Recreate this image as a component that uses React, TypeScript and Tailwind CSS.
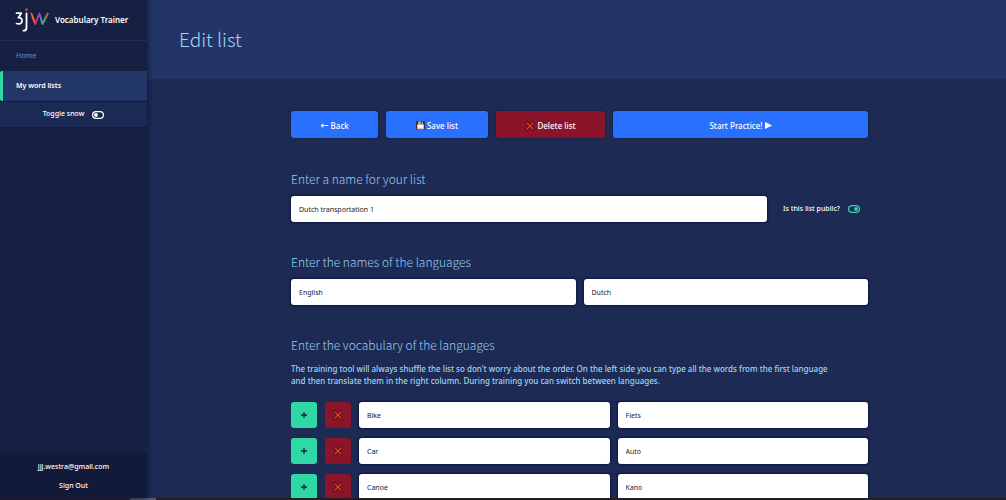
import type { ReactNode } from "react";

const words = [
  { id: 1, from: "Bike", to: "Fiets" },
  { id: 2, from: "Car", to: "Auto" },
  { id: 3, from: "Canoe", to: "Kano" },
];

const inputClass =
  "h-[26px] w-full min-w-0 rounded-[3px] bg-white px-2 text-[7px] text-[#222] shadow-[0_0_2px_1px_#0d1645] outline-none";

const buttonClass =
  "flex h-[27px] items-center justify-center gap-0.5 rounded-[3px] pt-0.5 text-[8px] font-medium text-white shadow-[0_0_2px_#10183a]";

function Logo() {
  return (
    <svg viewBox="0 0 34 26" className="h-[26px] w-[34px]" fill="none" strokeLinecap="round" strokeLinejoin="round">
      <defs>
        <linearGradient id="wave" x1="0" x2="1" y1="0" y2="0">
          <stop offset="0" stopColor="#f0443a" />
          <stop offset="0.12" stopColor="#f58a1f" />
          <stop offset="0.24" stopColor="#ee2a5c" />
          <stop offset="0.45" stopColor="#c026a8" />
          <stop offset="0.6" stopColor="#2a9be0" />
          <stop offset="0.78" stopColor="#3fb56b" />
          <stop offset="1" stopColor="#ef4a36" />
        </linearGradient>
      </defs>
      <path d="M1.500 6.200h4.800L3.400 10.700c2.400-.2 3.700 1 3.700 3.100 0 2.400-2.300 3.700-5.600 2.700" stroke="#fff" strokeWidth="1.700" />
      <path d="M11.500 6.500v14.200c0 2-.8 3-3 3" stroke="#fff" strokeWidth="1.800" />
      <circle cx="11.500" cy="2.600" r="1.300" fill="#ef3b36" />
      <path d="M16.300 6.500l4 10.500 4-10.500 3.200 10.500 5.300-10.500" stroke="url(#wave)" strokeWidth="1.900" />
    </svg>
  );
}

function Switch({ id, on = false }: { id: string; on?: boolean }) {
  return (
    <span className={`relative flex h-2 w-3 ${on ? "text-[#2ed9a5]" : "text-white"}`}>
      <input id={id} type="checkbox" defaultChecked={on} className="absolute inset-0 h-full w-full opacity-0" />
      <svg viewBox="0 0 12 8" className="h-2 w-3" fill="none" stroke="currentColor">
        <rect x="0.6" y="0.6" width="10.800" height="6.800" rx="3.400" strokeWidth="1.200" />
        <circle cx={on ? 8 : 4} cy="4" r="1.900" fill="currentColor" stroke="none" />
      </svg>
    </span>
  );
}

function Cross() {
  return (
    <svg viewBox="0 0 10 10" className="h-[10px] w-[10px]" strokeLinecap="square">
      <path d="M2 2l6 6M8 2L2 8" stroke="#3a0d14" strokeWidth="2.800" />
      <path d="M2 2l6 6M8 2L2 8" stroke="#f5401b" strokeWidth="1.300" />
    </svg>
  );
}

function Floppy() {
  return (
    <svg viewBox="0 0 9 9" className="h-[9px] w-[9px]">
      <rect width="9" height="9" rx="1" fill="#37303a" />
      <rect x="2.200" y="0.500" width="4.600" height="2.500" fill="#b9bcc4" />
      <rect x="4.800" y="0.800" width="1.200" height="1.700" fill="#37303a" />
      <rect x="1.300" y="3.400" width="6.400" height="4.800" fill="#fff" />
      <rect x="1.300" y="7.200" width="6.400" height="1" fill="#efb0b5" />
    </svg>
  );
}

function Heading({ children }: { children: ReactNode }) {
  return (
    <h2 className="font-['Noto_Sans_CJK_JP',sans-serif] text-[12px] leading-[18px] font-light text-[#9bcdf2]">
      {children}
    </h2>
  );
}

function Sidebar() {
  return (
    <aside className="z-10 flex w-[147px] shrink-0 flex-col bg-[#162042] text-[7px] font-medium text-white shadow-[0_0_6px_#0d1430]">
      <div className="flex h-10 items-center gap-1.5 px-[15px]">
        <Logo />
        <span className="text-[8px] font-semibold whitespace-nowrap">Vocabulary Trainer</span>
      </div>
      <nav className="flex flex-col border-t border-[#20305c]">
        <a href="#home" className="flex h-[30px] items-center px-4 text-[#5f84ca]">
          Home
        </a>
        <a
          href="#lists"
          className="flex h-[30px] items-center rounded-l-xs border-l-3 border-[#2ed9a5] bg-[#223668] pl-[13px] font-semibold"
        >
          My word lists
        </a>
      </nav>
      <div className="flex h-[27px] items-center justify-center gap-2 border-y border-[#111a38] bg-[#1b2a55]">
        <label htmlFor="snow">Toggle snow</label>
        <Switch id="snow" />
      </div>
      <div className="mt-auto flex h-[45px] flex-col items-center gap-[9px] bg-[#111b39] pt-[9px] leading-[10px]">
        <span>jjj.westra@gmail.com</span>
        <button type="button">Sign Out</button>
      </div>
    </aside>
  );
}

export default function App() {
  return (
    <div className="flex h-screen flex-col overflow-hidden bg-[#1c2a54] font-['Noto_Sans',sans-serif]">
      <div className="flex min-h-0 flex-1">
        <Sidebar />
        <main className="min-w-0 flex-1 overflow-hidden">
          <header className="flex h-[79px] items-center bg-[#223566] px-8">
            <h1 className="font-['Noto_Sans_CJK_JP',sans-serif] text-[19px] font-light text-[#a3d5f5]">Edit list</h1>
          </header>

          <form className="ml-1.5 px-8 pt-8">
            <div className="mx-auto flex max-w-[577px] flex-col">
              {/* Actions */}
              <div className="flex gap-2">
                <button type="button" className={`${buttonClass} w-[87px] bg-[#2970ff]`}>
                  <span className="font-['DejaVu_Sans',sans-serif] text-[10px]">←</span>
                  Back
                </button>
                <button type="button" className={`${buttonClass} w-[102px] bg-[#2970ff]`}>
                  <Floppy />
                  Save list
                </button>
                <button type="button" className={`${buttonClass} w-[109px] bg-[#8a152b]`}>
                  <Cross />
                  Delete list
                </button>
                <button type="button" className={`${buttonClass} flex-1 bg-[#2970ff]`}>
                  Start Practice!
                  <svg viewBox="0 0 7 7" className="h-[7px] w-[7px]" fill="currentColor">
                    <path d="M0 0l7 3.500-7 3.500z" />
                  </svg>
                </button>
              </div>

              {/* List name */}
              <section className="mt-8 flex flex-col gap-2">
                <Heading>Enter a name for your list</Heading>
                <div className="flex items-center gap-4">
                  <input aria-label="List name" defaultValue="Dutch transportation 1" className={inputClass} />
                  <div className="flex shrink-0 items-center gap-2 pr-2 text-[7px] font-medium text-white">
                    <label htmlFor="public">Is this list public?</label>
                    <Switch id="public" on />
                  </div>
                </div>
              </section>

              {/* Language names */}
              <section className="mt-[31px] flex flex-col gap-2">
                <Heading>Enter the names of the languages</Heading>
                <div className="flex gap-2">
                  <input aria-label="First language" defaultValue="English" className={inputClass} />
                  <input aria-label="Second language" defaultValue="Dutch" className={inputClass} />
                </div>
              </section>

              {/* Vocabulary */}
              <section className="mt-[31px] flex flex-col">
                <Heading>Enter the vocabulary of the languages</Heading>
                <p className="mt-[9px] pr-8 text-[8px] leading-3 font-medium text-[#a3d5f5]">
                  The training tool will always shuffle the list so don't worry about the order. On the left side you
                  can type all the words from the first language and then translate them in the right column. During
                  training you can switch between languages.
                </p>
                <ul className="mt-[15px] flex flex-col gap-[10px]">
                  {words.map((word) => (
                    <li key={word.id} className="flex gap-2">
                      <button
                        type="button"
                        aria-label="Add word"
                        className="flex size-[26px] shrink-0 items-center justify-center rounded-[3px] bg-[#2ed9a5]"
                      >
                        <svg viewBox="0 0 6 6" className="h-1.5 w-1.5" stroke="#16213f" strokeWidth="1.300">
                          <path d="M3 0v6M0 3h6" />
                        </svg>
                      </button>
                      <button
                        type="button"
                        aria-label="Delete word"
                        className="flex size-[26px] shrink-0 items-center justify-center rounded-[3px] bg-[#8a152b]"
                      >
                        <Cross />
                      </button>
                      <input aria-label="Word" defaultValue={word.from} className={inputClass} />
                      <input aria-label="Translation" defaultValue={word.to} className={inputClass} />
                    </li>
                  ))}
                </ul>
              </section>
            </div>
          </form>
        </main>
      </div>
      <div className="flex h-0.5 shrink-0 bg-[#211f22] pl-[130px]">
        <div className="w-[26px] bg-[#55606e]" />
      </div>
    </div>
  );
}
